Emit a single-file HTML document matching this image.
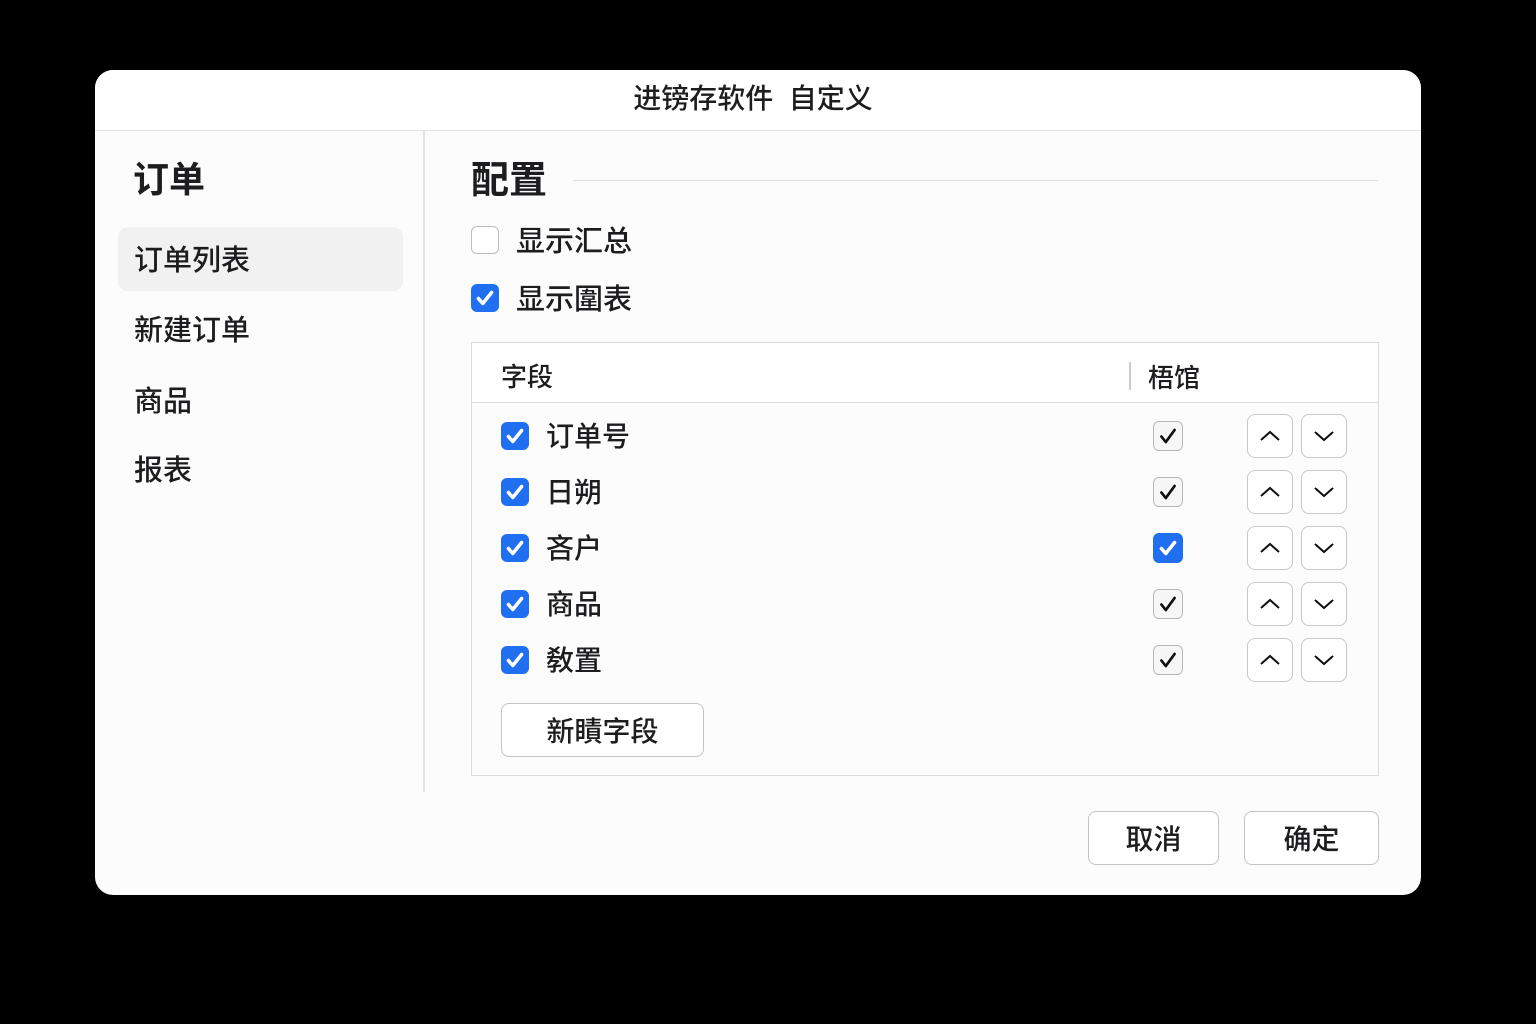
<!DOCTYPE html><html><head><meta charset="utf-8"><style>
*{box-sizing:border-box;margin:0;padding:0}
body{width:1536px;height:1024px;background:#000;position:relative;overflow:hidden;font-family:"Liberation Sans","Noto Sans CJK SC",sans-serif;color:#1d1d1f}
.a{position:absolute}
.dlg{left:95px;top:70px;width:1326px;height:825px;background:#fcfcfc;border-radius:18px;overflow:hidden}
.t{white-space:nowrap;line-height:1;font-weight:500}
.cb{width:28px;height:28px;border-radius:6px;background:#1f6ff0;display:flex;align-items:center;justify-content:center}
.cbo{width:28px;height:28px;border-radius:6px;border:1.5px solid #bdbdbd;background:#fff}
.sc{width:30px;height:30px;border-radius:6px;border:1.5px solid #b8b8b8;background:#f6f6f6;display:flex;align-items:center;justify-content:center}
.ab{width:46px;height:44px;border-radius:8px;border:1.5px solid #c8c8c8;background:#fff;display:flex;align-items:center;justify-content:center}
.btn{border:1.5px solid #c4c4c4;border-radius:8px;background:#fff;display:flex;align-items:center;justify-content:center;font-size:28px;font-weight:500}
</style></head><body>
<div class="a dlg">
<div class="a" style="left:0;top:0;width:1326px;height:61px;background:#fff;border-bottom:1.5px solid #e2e2e2"></div>
<div class="a t" style="left:0;width:1316px;top:15px;text-align:center;font-size:28px">进镑存软件&nbsp;&nbsp;自定义</div>
<div class="a" style="left:328px;top:61px;width:1.5px;height:661px;background:#e2e2e2"></div>
<div class="a t" style="left:38px;top:92px;font-size:36px;font-weight:bold">订单</div>
<div class="a" style="left:23px;top:157px;width:285px;height:64px;background:#f1f1f1;border-radius:10px"></div>
<div class="a t" style="left:39px;top:177px;font-size:29px">订单列表</div>
<div class="a t" style="left:39px;top:247px;font-size:29px">新建订单</div>
<div class="a t" style="left:39px;top:318px;font-size:29px">商品</div>
<div class="a t" style="left:39px;top:387px;font-size:29px">报表</div>
<div class="a t" style="left:376px;top:92px;font-size:38px;font-weight:bold">配置</div>
<div class="a" style="left:478px;top:110px;width:805px;height:1px;background:#ddd"></div>
<div class="a cbo" style="left:376px;top:156px"></div>
<div class="a t" style="left:421px;top:158px;font-size:29px">显示汇总</div>
<div class="a cb" style="left:376px;top:214px"><svg width="22" height="22" viewBox="0 0 20 20"><path d="M4 10.5l4 4.5 8-10" fill="none" stroke="#fff" stroke-width="3.2" stroke-linecap="round" stroke-linejoin="round"/></svg></div>
<div class="a t" style="left:421px;top:216px;font-size:29px">显示圍表</div>
<div class="a" style="left:376px;top:272px;width:908px;height:434px;border:1.5px solid #dcdcdc;background:#fcfcfc"></div>
<div class="a" style="left:377px;top:273px;width:906px;height:60px;background:#fff;border-bottom:1.5px solid #dcdcdc"></div>
<div class="a t" style="left:406px;top:294px;font-size:26px">字段</div>
<div class="a" style="left:1034px;top:292px;width:1.5px;height:28px;background:#ccc"></div>
<div class="a t" style="left:1053px;top:295px;font-size:26px">梧馆</div>
<div id="rows"></div>
<div class="a btn" style="left:406px;top:633px;width:203px;height:54px">新瞔字段</div>
<div class="a btn" style="left:993px;top:741px;width:131px;height:54px">取消</div>
<div class="a btn" style="left:1149px;top:741px;width:135px;height:54px">确定</div>
</div>
<script>
var names=["订单号","日朔","吝户","商品","敎置"],h="";
names.forEach(function(n,i){var c=436+56*i-70;
var chk='<svg width="22" height="22" viewBox="0 0 20 20"><path d="M4 10.5l4 4.5 8-10" fill="none" stroke="#fff" stroke-width="3.2" stroke-linecap="round" stroke-linejoin="round"/></svg>';
h+='<div class="a cb" style="left:406px;top:'+(c-14)+'px">'+chk+'</div>';
h+='<div class="a t" style="left:451px;top:'+(c-13)+'px;font-size:28px">'+n+'</div>';
if(i==2)h+='<div class="a cb" style="left:1058px;top:'+(c-15)+'px;width:30px;height:30px">'+chk+'</div>';
else h+='<div class="a sc" style="left:1058px;top:'+(c-15)+'px"><svg width="22" height="22" viewBox="0 0 20 20"><path d="M4 10.5l4 5 8-11" fill="none" stroke="#111" stroke-width="2.4" stroke-linecap="round" stroke-linejoin="round"/></svg></div>';
h+='<div class="a ab" style="left:1152px;top:'+(c-22)+'px"><svg width="22" height="14" viewBox="0 0 22 14"><path d="M2 11l9-8 9 8" fill="none" stroke="#111" stroke-width="2"/></svg></div>';
h+='<div class="a ab" style="left:1206px;top:'+(c-22)+'px"><svg width="22" height="14" viewBox="0 0 22 14"><path d="M2 3l9 8 9-8" fill="none" stroke="#111" stroke-width="2"/></svg></div>';
});
document.getElementById('rows').outerHTML=h;
</script>
</body></html>
